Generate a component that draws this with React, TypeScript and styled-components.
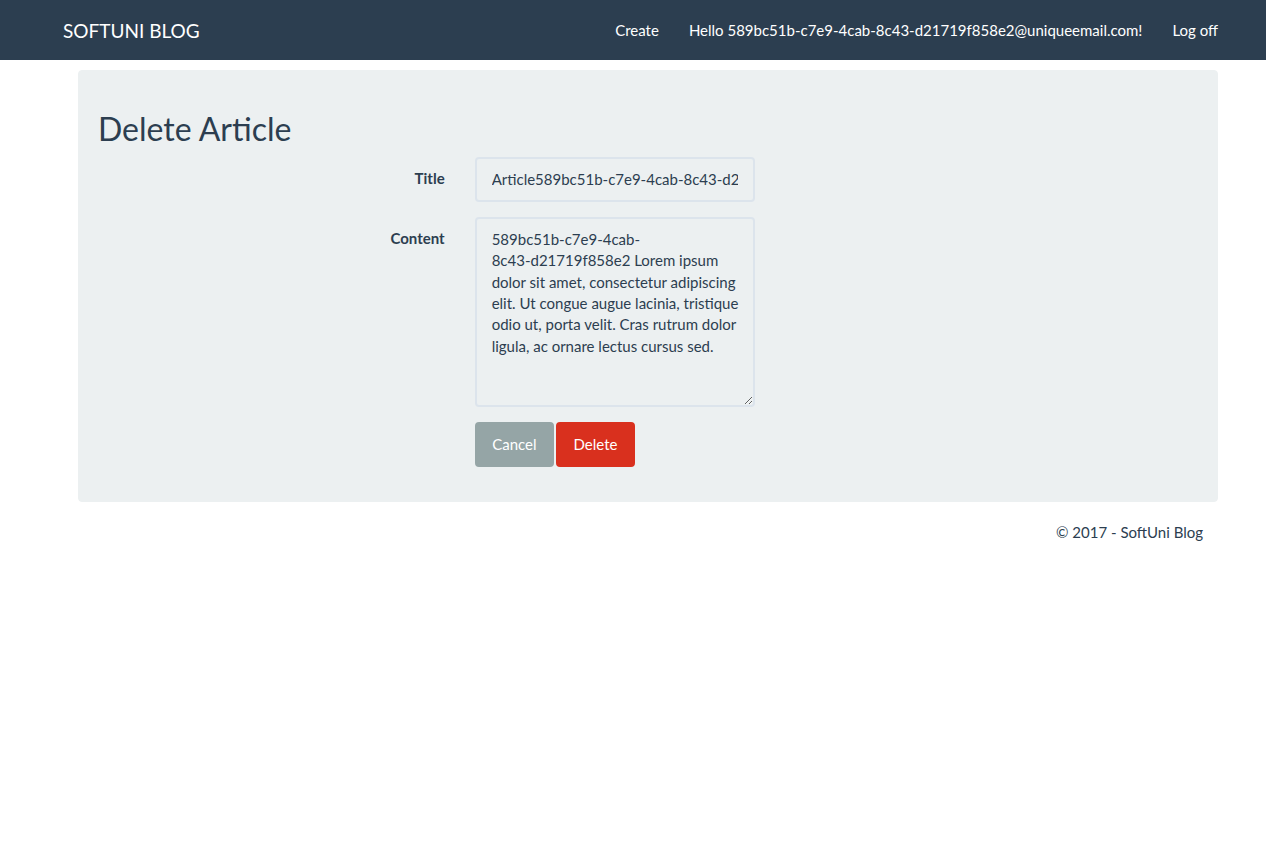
import React from "react";
import styled, { createGlobalStyle } from "styled-components";

const GlobalStyle = createGlobalStyle`
  html, body {
    margin: 0;
    padding: 0;
    background: #ffffff;
  }
  body {
    font-family: Lato, "Open Sans", "Liberation Sans", sans-serif;
    font-size: 15px;
    line-height: 1.42857143;
    color: #2c3e50;
  }
  * {
    box-sizing: border-box;
  }
`;

const article = {
  title: "Article589bc51b-c7e9-4cab-8c43-d21719f858e2",
  content:
    "589bc51b-c7e9-4cab-\n8c43-d21719f858e2 Lorem ipsum dolor sit amet, consectetur adipiscing elit. Ut congue augue lacinia, tristique odio ut, porta velit. Cras rutrum dolor ligula, ac ornare lectus cursus sed.",
};

const App = () => {
  return (
    <>
      <GlobalStyle />
      <Navbar>
        <NavInner>
          <Brand href="#">SOFTUNI BLOG</Brand>
          <NavRight>
            <NavLink href="#">Create</NavLink>
            <NavLink href="#">
              Hello 589bc51b-c7e9-4cab-8c43-d21719f858e2@uniqueemail.com!
            </NavLink>
            <NavLink href="#">Log off</NavLink>
          </NavRight>
        </NavInner>
      </Navbar>
      <Container>
        <Well>
          <Heading>Delete Article</Heading>
          <Form onSubmit={(e) => e.preventDefault()}>
            <FormGroup>
              <Label htmlFor="title">Title</Label>
              <Field>
                <TitleInput id="title" type="text" value={article.title} readOnly />
              </Field>
            </FormGroup>
            <FormGroup>
              <Label htmlFor="content">Content</Label>
              <Field>
                <ContentArea id="content" value={article.content} readOnly />
              </Field>
            </FormGroup>
            <FormGroup>
              <Label as="span" />
              <Actions>
                <Btn href="#" $variant="default">
                  Cancel
                </Btn>
                <Btn as="button" type="submit" $variant="danger">
                  Delete
                </Btn>
              </Actions>
            </FormGroup>
          </Form>
        </Well>
        <Footer>
          <p>© 2017 - SoftUni Blog</p>
        </Footer>
      </Container>
    </>
  );
};

export default App;

const Navbar = styled.nav`
  background: #2c3e50;
  height: 60px;
`;

const NavInner = styled.div`
  width: 1170px;
  margin: 0 auto;
  display: flex;
  justify-content: space-between;
  align-items: center;
  height: 100%;
`;

const Brand = styled.a`
  color: #ffffff;
  font-size: 19px;
  line-height: 21px;
  padding: 0 15px;
  text-decoration: none;
`;

const NavRight = styled.div`
  display: flex;
  margin-right: -15px;
`;

const NavLink = styled.a`
  color: #ffffff;
  font-size: 15px;
  line-height: 21px;
  padding: 19.5px 15px;
  text-decoration: none;
`;

const Container = styled.div`
  width: 1170px;
  margin: 0 auto;
  padding: 0 15px;
`;

const Well = styled.div`
  margin: 10px -15px 20px 15px;
  padding: 19px;
  background: #ecf0f1;
  border: 1px solid #ecf0f1;
  border-radius: 4px;
`;

const Heading = styled.h2`
  font-size: 32px;
  font-weight: 400;
  line-height: 1.1;
  margin: 21px 0 10.5px;
`;

const Form = styled.form`
  display: flex;
  flex-direction: column;
`;

const FormGroup = styled.div`
  display: grid;
  grid-template-columns: 346.67px 1fr;
  column-gap: 30px;
  margin-bottom: 15px;
`;

const Label = styled.label`
  text-align: right;
  font-weight: 700;
  padding-top: 11px;
`;

const Field = styled.div`
  display: flex;
`;

const controlStyles = `
  width: 280px;
  max-width: 280px;
  padding: 10px 15px;
  font-family: Lato, "Open Sans", "Liberation Sans", sans-serif;
  font-size: 15px;
  line-height: 1.42857143;
  color: #2c3e50;
  background: #ecf0f1;
  border: 2px solid #dce4ec;
  border-radius: 4px;
  outline: none;
`;

const TitleInput = styled.input`
  ${controlStyles}
  height: 45px;
`;

const ContentArea = styled.textarea`
  ${controlStyles}
  padding-right: 11px;
  height: 190px;
  resize: vertical;
  display: block;
`;

const Actions = styled.div`
  display: flex;
  gap: 2px;
`;

const Btn = styled.a<{ $variant: "default" | "danger" }>`
  display: inline-block;
  padding: 10px 15.5px;
  font-family: inherit;
  font-size: 15px;
  line-height: 21px;
  color: #ffffff;
  text-decoration: none;
  cursor: pointer;
  border-radius: 4px;
  background: ${(p) => (p.$variant === "danger" ? "#d9301e" : "#95a5a6")};
  border: 2px solid ${(p) => (p.$variant === "danger" ? "#d9301e" : "#95a5a6")};
`;

const Footer = styled.footer`
  text-align: right;

  p {
    margin: 0;
  }
`;
